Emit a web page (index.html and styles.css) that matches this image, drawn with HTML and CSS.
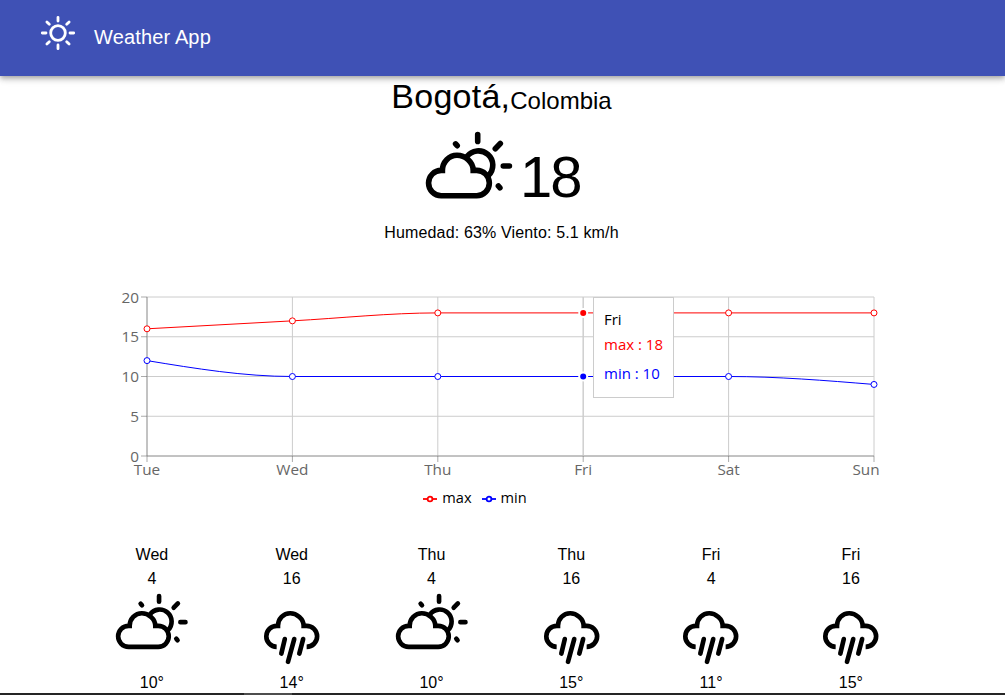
FILE: index.html
```html
<!DOCTYPE html>
<html lang="es">
<head>
<meta charset="utf-8">
<title>Weather App</title>
<link rel="stylesheet" href="styles.css">
</head>
<body>
<svg class="defs" width="0" height="0">
  <symbol id="cloudy" viewBox="0 0 100 80">
    <path d="M21.2 70.7A12.65 12.65 0 0 1 21.2 45.4H22.4C22.4 37 29 30.3 37 30.3S53.2 37 53.2 45.4H56.7A12.65 12.65 0 0 1 56.7 70.7Z"/>
    <path d="M46.8 31.7A14.4 14.4 0 1 1 68.4 50.6"/>
    <path class="cap" d="M57.7 9.6V16.4M75.3 23.7L80.3 18.5M83.3 41H89.4M78.4 61L79.9 62.8M35.6 18.9L37.2 20.7"/>
  </symbol>
  <symbol id="rain" viewBox="0 0 100 92">
    <path d="M30.8 70.7A12.65 12.65 0 0 1 31.2 45.4H32.4C32.4 37 39 30.3 47 30.3S63.2 37 63.2 45.4H66.7A12.65 12.65 0 0 1 66.8 70.7"/>
    <path class="cap" d="M40.6 61.3L36.4 78.8M51.9 61.3L44.4 88.6M62.6 61.3L58 78.8"/>
  </symbol>
</svg>

<header class="bar">
  <svg class="sun" viewBox="0 0 36 36">
    <circle cx="18" cy="18" r="7.3"/>
    <path d="M18 2.3V6M18 30V33.7M2.3 18H6M30 18H33.7M6.9 6.9L9.3 9.3M26.7 26.7L29.1 29.1M6.9 29.1L9.3 26.7M26.7 9.3L29.1 6.9"/>
  </svg>
  <h1 class="title">Weather App</h1>
</header>

<main>
  <h2 class="place"><span class="city">Bogotá,</span><span class="country">Colombia</span></h2>
  <div class="now">
    <svg class="icon now-icon" viewBox="0 0 100 80"><use href="#cloudy"/></svg>
    <span class="temp">18</span>
  </div>
  <p class="details">Humedad: 63% Viento: 5.1 km/h</p>

  <section class="chart">
    <svg class="plot" viewBox="0 0 840 195">
      <g transform="translate(65 7)">
        <path class="grid" d="M0 0H727M0 39.75H727M0 79.5H727M0 119.25H727M0 159H727M0 0V159M145.4 0V159M290.8 0V159M436.2 0V159M581.6 0V159M727 0V159"/>
        <path class="axis" d="M0 159H727M0 0V159M-6 0H0M-6 39.75H0M-6 79.5H0M-6 119.25H0M-6 159H0M0 159V165M145.4 159V165M290.8 159V165M436.2 159V165M581.6 159V165M727 159V165"/>
        <g class="ylabels">
          <text x="-8" y="6">20</text><text x="-8" y="45">15</text><text x="-8" y="85">10</text><text x="-8" y="125">5</text><text x="-8" y="165">0</text>
        </g>
        <g class="xlabels">
          <text x="0" y="178">Tue</text><text x="145.4" y="178">Wed</text><text x="290.8" y="178">Thu</text><text x="436.2" y="178">Fri</text><text x="581.6" y="178">Sat</text><text x="719" y="178">Sun</text>
        </g>
        <path class="cursor" d="M436.2 0V159"/>
        <g class="max">
          <path d="M0 31.8L145.4 23.85C193.9 21.2 242.3 15.9 290.8 15.9H727"/>
          <circle cx="0" cy="31.8" r="3"/><circle cx="145.4" cy="23.85" r="3"/><circle cx="290.8" cy="15.9" r="3"/><circle cx="581.6" cy="15.9" r="3"/><circle cx="727" cy="15.9" r="3"/>
          <circle class="active" cx="436.2" cy="15.9" r="4"/>
        </g>
        <g class="min">
          <path d="M0 63.6C48.5 71.55 96.9 79.5 145.4 79.5H581.6C630.1 79.5 678.5 83.5 727 87.45"/>
          <circle cx="0" cy="63.6" r="3"/><circle cx="145.4" cy="79.5" r="3"/><circle cx="290.8" cy="79.5" r="3"/><circle cx="581.6" cy="79.5" r="3"/><circle cx="727" cy="87.45" r="3"/>
          <circle class="active" cx="436.2" cy="79.5" r="4"/>
        </g>
      </g>
    </svg>
    <div class="tooltip">
      <p class="tip-label">Fri</p>
      <p class="tip-max">max : 18</p>
      <p class="tip-min">min : 10</p>
    </div>
    <div class="legend">
      <span class="entry"><svg class="key max" viewBox="0 0 14 8"><path d="M0 4H14"/><circle cx="7" cy="4" r="2.4"/></svg>max</span>
      <span class="entry"><svg class="key min" viewBox="0 0 14 8"><path d="M0 4H14"/><circle cx="7" cy="4" r="2.4"/></svg>min</span>
    </div>
  </section>

  <section class="forecast">
    <div class="slot"><span>Wed</span><span>4</span><svg class="icon slot-icon" viewBox="0 0 100 92"><use href="#cloudy" width="100" height="80"/></svg><span>10°</span></div>
    <div class="slot"><span>Wed</span><span>16</span><svg class="icon slot-icon" viewBox="0 0 100 92"><use href="#rain"/></svg><span>14°</span></div>
    <div class="slot"><span>Thu</span><span>4</span><svg class="icon slot-icon" viewBox="0 0 100 92"><use href="#cloudy" width="100" height="80"/></svg><span>10°</span></div>
    <div class="slot"><span>Thu</span><span>16</span><svg class="icon slot-icon" viewBox="0 0 100 92"><use href="#rain"/></svg><span>15°</span></div>
    <div class="slot"><span>Fri</span><span>4</span><svg class="icon slot-icon" viewBox="0 0 100 92"><use href="#rain"/></svg><span>11°</span></div>
    <div class="slot"><span>Fri</span><span>16</span><svg class="icon slot-icon" viewBox="0 0 100 92"><use href="#rain"/></svg><span>15°</span></div>
  </section>
</main>
<footer class="strip"><div class="thumb"></div></footer>
</body>
</html>
```
FILE: styles.css
```css
* { box-sizing: border-box; }
body {
  margin: 0;
  height: 695px;
  overflow: hidden;
  display: flex;
  flex-direction: column;
  background: #fff;
  color: #000;
  font-family: "Liberation Sans", Arial, sans-serif;
  font-size: 16px;
}
h1, h2, p { margin: 0; font-weight: 400; }
.defs { display: none; }
main { flex: 1; min-height: 0; overflow: hidden; }

.bar {
  flex: none;
  height: 76px;
  display: flex;
  align-items: flex-start;
  padding: 15px 0 0 40px;
  background: #3f51b5;
  color: #fff;
  box-shadow: 0 2px 4px -1px rgba(0,0,0,.2), 0 4px 5px 0 rgba(0,0,0,.14), 0 1px 10px 0 rgba(0,0,0,.12);
  z-index: 1;
}
.sun {
  width: 36px;
  height: 36px;
  margin-top: .4px;
  fill: none;
  stroke: #fff;
  stroke-width: 2.8;
  stroke-linecap: round;
}
.title { margin: 6px 0 0 18px; font-size: 20px; line-height: 32px; letter-spacing: .15px; }

.place { display: flex; justify-content: center; align-items: flex-start; height: 42px; padding-right: 2px; }
.city { font-size: 34px; line-height: 40px; letter-spacing: .25px; }
.country { font-size: 24px; line-height: 50px; }

.icon { display: block; fill: none; stroke: #000; stroke-width: 5.6; }
.cap { stroke-linecap: round; }
.now { display: flex; height: 100px; padding: 7px 0 0 420px; }
.now-icon { width: 100px; height: 80px; }
.temp { font-size: 58px; line-height: 70px; margin-top: 17px; letter-spacing: -2px; }
.details { height: 72px; padding: 3px 2px 0 0; line-height: 24px; text-align: center; letter-spacing: .15px; }

.chart {
  position: relative;
  width: 840px;
  height: 253px;
  margin-left: 82px;
  font-family: "Open Sans", "Noto Sans", sans-serif;
}
.plot { display: block; width: 840px; height: 195px; overflow: visible; }
.grid { fill: none; stroke: #ccc; }
.cursor { stroke: #ccc; }
.axis { fill: none; stroke: #666; stroke-opacity: .55; }
.ylabels, .xlabels { fill: #666; font-size: 15.3px; }
.ylabels { text-anchor: end; }
.xlabels { text-anchor: middle; }
.max { stroke: #f00; }
.min { stroke: #00f; }
.ylabels, .xlabels { stroke: none; }
.max path, .min path { fill: none; }
.max circle, .min circle { fill: #fff; }
.max .active { fill: #f00; stroke: #fff; stroke-width: 2; }
.min .active { fill: #00f; stroke: #fff; stroke-width: 2; }

.tooltip {
  position: absolute;
  left: 511px;
  top: 7px;
  width: 81px;
  height: 101px;
  padding: 9px 10px;
  background: #fff;
  border: 1px solid #ccc;
  font-size: 15px;
  line-height: 24px;
  white-space: nowrap;
}
.tip-max { margin-top: 1px; color: #f00; }
.tip-min { margin-top: 5px; color: #00f; }
.legend { display: flex; justify-content: center; gap: 10px; height: 24px; padding-right: 54px; font-size: 14.6px; line-height: 24px; }
.entry { display: flex; align-items: center; gap: 5px; }
.key { width: 14px; height: 8px; margin-top: 3px; stroke-width: 1.8; }

.forecast { display: grid; grid-template-columns: repeat(6, 139.8px); margin-left: 82px; }
.slot { display: flex; flex-direction: column; align-items: center; line-height: 24px; }
.slot-icon { width: 83.3px; height: 76.6px; margin: -3px -1px 6px 1px; }

.strip { flex: none; height: 2px; background: #252525; }
.thumb { width: 48px; height: 2px; margin-left: 244px; background: #4d4d4d; }
```
